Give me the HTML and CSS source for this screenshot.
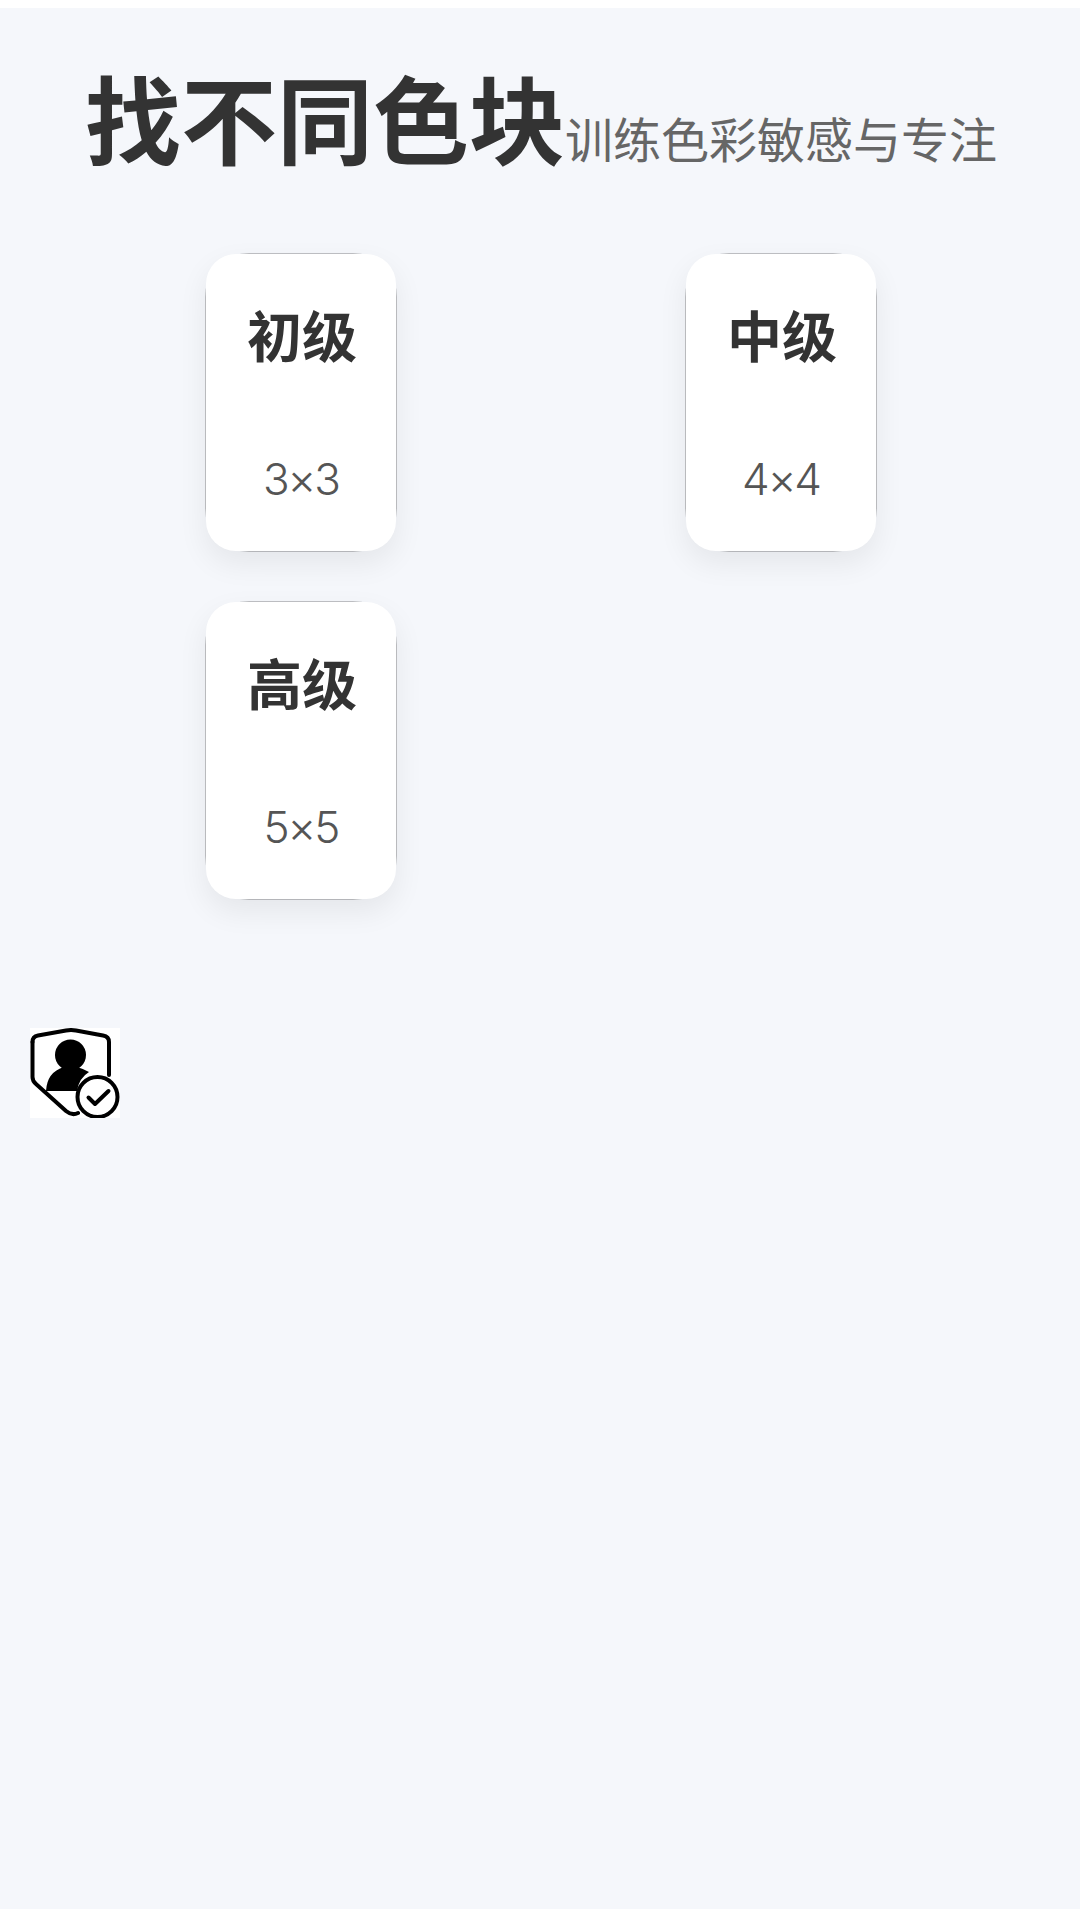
FILE: index.html
```html
<!DOCTYPE html>
<html lang="zh-CN">
<head>
    <meta charset="UTF-8">
    <meta name="viewport" content="width=device-width, initial-scale=1.0">
    <title>找不同色块</title>
    <link rel="stylesheet" href="styles.css">
</head>
<body>
    <div class="page">
        <div class="header">
            <h1 class="title">找不同色块</h1>
            <span class="subtitle">训练色彩敏感与专注</span>
        </div>

        <div class="levels">
            <div class="level-card">
                <div class="level-name">初级</div>
                <div class="level-size">3×3</div>
            </div>
            <div class="level-card">
                <div class="level-name">中级</div>
                <div class="level-size">4×4</div>
            </div>
            <div class="level-card">
                <div class="level-name">高级</div>
                <div class="level-size">5×5</div>
            </div>
        </div>

        <div class="badge">
            <svg viewBox="0 0 90 90" width="90" height="90">
                <path d="M2.5 14 Q2.5 8.500 8 7.500 L36 2.500 Q41 1.500 46 2.500 L73 7.500 Q79 8.500 79 14 L79 47" fill="none" stroke="#000" stroke-width="4" stroke-linecap="round"/>
                <path d="M2.500 14 L2.500 49 Q2.500 53 6 56 L36 83 Q42 88 48 85" fill="none" stroke="#000" stroke-width="4" stroke-linecap="round"/>
                <circle cx="40.500" cy="27" r="15.500" fill="#000"/>
                <path d="M16 63 Q17 44 34 39 L47 39 Q54 41 59 44 Q49 50 47 63 Z" fill="#000"/>
                <circle cx="67.500" cy="69" r="20" fill="#fff" stroke="#000" stroke-width="4"/>
                <path d="M58.500 69.500 L65 76 L78.500 63" fill="none" stroke="#000" stroke-width="4" stroke-linecap="round" stroke-linejoin="round"/>
            </svg>
        </div>
    </div>
</body>
</html>
```

FILE: styles.css
```css
html, body {
    margin: 0;
    padding: 0;
    background: #fff;
}
.page {
    isolation: isolate;
    margin-top: 8px;
    height: 1901px;
    background-color: #f5f7fb;
    font-family: Inter, "Noto Sans CJK SC", sans-serif;
    overflow: hidden;
}
.header {
    display: flex;
    justify-content: center;
    align-items: flex-end;
    padding: 44px 0 0 2px;
}
.title {
    margin: 0;
    font-size: 96px;
    line-height: 140px;
    font-weight: 700;
    color: #333;
}
.subtitle {
    margin-bottom: 21px;
    font-size: 48px;
    line-height: 60px;
    color: #666;
}
.levels {
    display: grid;
    grid-template-columns: 480px 480px;
    justify-content: center;
    justify-items: center;
    row-gap: 51px;
    margin-top: 62px;
    padding-left: 2px;
}
.level-card {
    position: relative;
    width: 190px;
    height: 297px;
    box-sizing: border-box;
    padding-top: 44px;
    text-align: center;
    background: #fff;
    border-radius: 30px;
    box-shadow: 0 12px 30px rgba(0,0,0,0.07);
}
/* thin grey line along the edges, hidden at the corners */
.level-card::before {
    content: "";
    position: absolute;
    inset: -1px;
    border-radius: 44px;
    background: rgba(0,0,0,0.22);
    z-index: -1;
}
.level-name {
    padding-left: 2px;
    font-size: 55px;
    line-height: 78px;
    font-weight: 700;
    color: #333;
}
.level-size {
    margin-top: 77px;
    font-size: 44px;
    line-height: 53px;
    font-weight: 300;
    letter-spacing: -2px;
    color: #555;
}
.badge {
    width: 90px;
    height: 90px;
    margin: 129px 0 0 30px;
    background: #fff;
}
```
